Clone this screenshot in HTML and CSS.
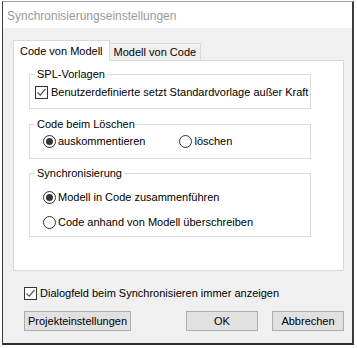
FILE: index.html
```html
<!DOCTYPE html>
<html lang="de">
<head>
  <meta charset="UTF-8" />
  <title>Synchronisierungseinstellungen</title>
  <link rel="stylesheet" href="styles.css">
</head>
<body>

  <div class="window">
    <!-- Title bar -->
    <div class="titlebar">Synchronisierungseinstellungen</div>

    <div class="client">
      <!-- Tabs -->
      <div class="tabs">
        <div class="tab active">Code von Modell</div>
        <div class="tab">Modell von Code</div>
      </div>

      <div class="panel">
        <fieldset class="group group-spl">
          <legend>SPL-Vorlagen</legend>
          <label class="opt">
            <span class="check"><svg width="11" height="11" viewBox="0 0 11 11"><polyline points="1.5,5.5 4.2,8.2 9.5,2" fill="none" stroke="#555" stroke-width="1.2"/></svg></span>
            Benutzerdefinierte setzt Standardvorlage außer Kraft
          </label>
        </fieldset>

        <fieldset class="group group-delete">
          <legend>Code beim Löschen</legend>
          <div class="row">
            <label class="opt radio-opt"><span class="radio on"></span>auskommentieren</label>
            <label class="opt radio-opt opt-second"><span class="radio"></span>löschen</label>
          </div>
        </fieldset>

        <fieldset class="group group-sync">
          <legend>Synchronisierung</legend>
          <label class="opt radio-opt"><span class="radio on"></span>Modell in Code zusammenführen</label>
          <label class="opt radio-opt"><span class="radio"></span>Code anhand von Modell überschreiben</label>
        </fieldset>
      </div>

      <label class="opt footer-check">
        <span class="check"><svg width="11" height="11" viewBox="0 0 11 11"><polyline points="1.5,5.5 4.2,8.2 9.5,2" fill="none" stroke="#555" stroke-width="1.2"/></svg></span>
        Dialogfeld beim Synchronisieren immer anzeigen
      </label>

      <div class="buttons">
        <button class="btn btn-wide">Projekteinstellungen</button>
        <div class="spacer"></div>
        <button class="btn">OK</button>
        <button class="btn">Abbrechen</button>
      </div>
    </div>
  </div>

</body>
</html>
```

FILE: styles.css
```css
* {
  box-sizing: border-box;
  font-family: 'Liberation Sans', Arial, sans-serif;
}

body {
  margin: 0;
  background: #fff;
  font-size: 11px;
  color: #000;
}

/* Window frame */
.window {
  margin: 1px 0 0 2px;
  width: 352px;
  height: 344px;
  border-top: 1px solid #a0a0a0;
  border-left: 1px solid #3c3c3c;
  border-right: 2px solid #3c3c3c;
  border-bottom: 2px solid #2e2e2e;
  box-shadow: 0 1px 0 #9a9a9a;
  display: flex;
  flex-direction: column;
}

.titlebar {
  height: 26px;
  background: #fff;
  color: #9a9a9a;
  font-size: 12px;
  padding: 7px 0 0 4px;
}

.client {
  flex: 1;
  background: #f0f0f0;
  padding: 12px 8px 0 10px;
}

/* Tabs */
.tabs {
  display: flex;
  align-items: flex-end;
  height: 20px;
}

.tab {
  height: 17px;
  padding: 2px 4px 0 4px;
  border: 1px solid #d9d9d9;
  border-bottom: none;
  background: #f0f0f0;
  margin-left: -1px;
}

.tab.active {
  position: relative;
  z-index: 1;
  height: 21px;
  margin-left: 0;
  margin-bottom: -1px;
  padding: 4px 6px 0 6px;
  background: #fff;
}

.panel {
  height: 211px;
  background: #fff;
  border: 1px solid #d9d9d9;
  padding: 0 32px 0 15px;
}

/* Group boxes */
.group {
  border: 1px solid #dcdcdc;
  margin: 0;
  min-width: 0;
  padding: 0 0 0 5px;
}

.group legend {
  padding: 0 2px;
  margin-left: 0;
  line-height: 14px;
}

.group-spl {
  margin-top: 6px;
  height: 42px;
  padding-top: 3px;
}

.group-delete {
  margin-top: 8px;
  height: 42px;
  padding-top: 2px;
}

.group-sync {
  margin-top: 7px;
  height: 71px;
  padding-top: 9px;
  display: flex;
  flex-direction: column;
  gap: 9px;
}

.row {
  display: flex;
}

.opt {
  display: flex;
  align-items: center;
  height: 16px;
  white-space: nowrap;
}

.radio-opt {
  margin-left: 8px;
}

.opt-second {
  margin-left: 34px;
}

/* Checkbox and radio marks */
.check {
  width: 13px;
  height: 13px;
  border: 1px solid #333;
  background: #fff;
  margin-right: 3px;
  display: flex;
  align-items: center;
  justify-content: center;
}

.radio {
  width: 13px;
  height: 13px;
  border: 1px solid #333;
  border-radius: 50%;
  background: #fff;
  margin-right: 2px;
  display: flex;
  align-items: center;
  justify-content: center;
}

.radio.on::after {
  content: "";
  width: 7px;
  height: 7px;
  border-radius: 50%;
  background: #333;
}

/* Footer */
.footer-check {
  margin: 14px 0 0 11px;
}

.buttons {
  display: flex;
  gap: 14px;
  margin: 10px 0 0 11px;
}

.spacer {
  flex: 1;
}

.btn {
  height: 20px;
  width: 72px;
  padding: 0;
  background: #e1e1e1;
  border: 1px solid #adadad;
  font-size: 11px;
  color: #000;
}

.btn-wide {
  width: 107px;
}
```
